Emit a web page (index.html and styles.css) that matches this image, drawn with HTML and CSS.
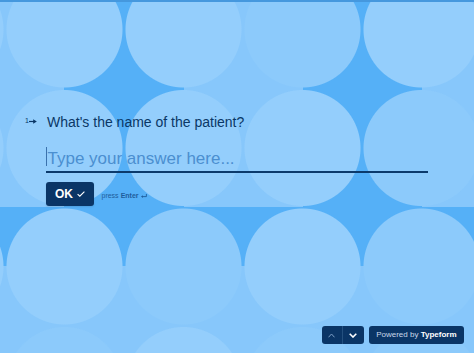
FILE: index.html
```html
<!DOCTYPE html>
<html lang="en">
<head>
<meta charset="utf-8">
<title>What's the name of the patient?</title>
<link rel="stylesheet" href="styles.css">
</head>
<body>
<div class="page">
  <div class="bg" aria-hidden="true">
    <div class="tile r"></div><div class="tile l"></div><div class="tile r"></div><div class="tile l faint"></div><div class="tile r"></div>
    <div class="tile r"></div><div class="tile l"></div><div class="tile r"></div><div class="tile l"></div><div class="tile r faint"></div>
    <div class="tile b"></div><div class="tile b"></div><div class="tile b faint"></div><div class="tile b"></div><div class="tile b faint"></div>
    <div class="tile t"></div><div class="tile t faint"></div><div class="tile t"></div><div class="tile t faint"></div><div class="tile t faint"></div>
  </div>
  <div class="progress"></div>
  <main class="content">
    <div class="question">
      <span class="qnum">1<svg class="qarrow" width="8" height="5" viewBox="0 0 8 5"><path d="M0 2.5H5" stroke="currentColor" stroke-width="1.2"/><path d="M4.2 0.3L7.8 2.5L4.2 4.7Z" fill="currentColor"/></svg></span>
      <h1 class="qtext">What's the name of the patient?</h1>
    </div>
    <div class="answer"><span class="caret"></span><span class="placeholder">Type your answer here...</span></div>
    <div class="actions">
      <button class="ok" type="button">OK<svg width="8" height="6" viewBox="0 0 8 6"><path d="M0.6 3.1L2.8 5.2L7.4 0.6" fill="none" stroke="#fff" stroke-width="1.1"/></svg></button>
      <span class="hint">press <b>Enter</b><svg class="ret" width="6" height="4" viewBox="0 0 6 4"><path d="M5.4 0V2.6H1" fill="none" stroke="currentColor" stroke-width="0.9"/><path d="M0 2.6L1.8 1.2V4Z" fill="currentColor"/></svg></span>
    </div>
  </main>
  <footer class="footer">
    <div class="nav">
      <button class="nav-btn up" type="button" aria-label="Previous"><svg width="7" height="5" viewBox="0 0 7 5"><path d="M0.5 4.3L3.5 1L6.5 4.3" fill="none" stroke="currentColor" stroke-width="1"/></svg></button>
      <button class="nav-btn down" type="button" aria-label="Next"><svg width="8" height="5" viewBox="0 0 8 5"><path d="M0.7 0.8L4 4L7.3 0.8" fill="none" stroke="currentColor" stroke-width="1.6"/></svg></button>
    </div>
    <a class="powered" href="#">Powered by <b>Typeform</b></a>
  </footer>
</div>
</body>
</html>
```

FILE: styles.css
```css
* { box-sizing: border-box; }
html, body { margin: 0; padding: 0; }
body { width: 474px; height: 353px; overflow: hidden; }

.page {
  position: relative;
  width: 474px;
  height: 353px;
  overflow: hidden;
  display: flex;
  flex-direction: column;
  background: #55b0f7;
  font-family: "Liberation Sans", Arial, sans-serif;
  color: #0a3766;
  --fill: #87c7fb;
  --circle: #94cefc;
}

.bg {
  position: absolute;
  left: -114px;
  top: -30px;
  display: grid;
  grid-template-columns: repeat(5, 119px);
  grid-auto-rows: 118.5px;
  z-index: 0;
}
.tile {
  background-image: radial-gradient(circle, var(--circle) 57.5px, rgba(148,206,252,0) 58.5px), var(--half);
}
.tile.faint { --circle: #8ccafb; }
.tile.l { --half: linear-gradient(to right, var(--fill) 50%, transparent 50%); }
.tile.r { --half: linear-gradient(to left, var(--fill) 50%, transparent 50%); }
.tile.b { --half: linear-gradient(to top, var(--fill) 50%, transparent 50%); }
.tile.t { --half: linear-gradient(to bottom, var(--fill) 50%, transparent 50%); }

.progress {
  position: relative;
  z-index: 1;
  height: 2px;
  flex-shrink: 0;
  background: #4598de;
}

.content {
  position: relative;
  z-index: 1;
  padding-top: 112px;
}

.question {
  display: flex;
  align-items: flex-start;
}
.qnum {
  display: inline-flex;
  align-items: center;
  width: 22px;
  margin-left: 25px;
  margin-top: 3px;
  font-size: 7px;
  line-height: 8px;
  color: #0a3766;
}
.qarrow { margin-left: 0.5px; }
.qtext {
  margin: 0;
  font-size: 14px;
  line-height: 16px;
  font-weight: normal;
  color: #0a3766;
}

.answer {
  margin: 17px 0 0 46px;
  width: 382px;
  height: 26px;
  font-size: 17px;
  line-height: 24px;
  border-bottom: 2px solid #0b3a6c;
  white-space: nowrap;
}
.caret {
  display: inline-block;
  width: 1px;
  height: 19px;
  vertical-align: -2px;
  background: #3b72ad;
  margin-right: 0.5px;
}
.placeholder { color: #4b8fd0; }

.actions {
  display: flex;
  align-items: center;
  margin: 9px 0 0 46px;
}
.ok {
  display: flex;
  align-items: center;
  gap: 4px;
  height: 24px;
  padding: 0 9px;
  border: 0;
  border-radius: 3px;
  background: #0a3566;
  color: #fff;
  font-family: inherit;
  font-size: 12px;
  font-weight: bold;
  box-shadow: 0 1px 2px rgba(0,0,0,0.1);
}
.hint {
  display: inline-flex;
  align-items: center;
  margin-left: 7.5px;
  padding-top: 3px;
  font-size: 7px;
  line-height: 8px;
  color: #1f5d9c;
}
.hint b { margin-left: 2px; }
.ret { margin-left: 2px; }

.footer {
  position: relative;
  z-index: 1;
  margin-top: auto;
  display: flex;
  justify-content: flex-end;
  gap: 5px;
  padding: 0 10px 9px 0;
}
.nav {
  display: flex;
  height: 18px;
  border-radius: 3px;
  overflow: hidden;
  background: #0a3566;
}
.nav-btn {
  display: flex;
  align-items: center;
  justify-content: center;
  height: 18px;
  padding: 0;
  border: 0;
  background: transparent;
}
.nav-btn.up { width: 20.5px; color: #7d9fc6; }
.nav-btn.down { width: 21.5px; color: #fff; border-left: 1px solid #24507f; }
.powered {
  display: block;
  height: 18px;
  padding: 0 7.5px;
  border-radius: 3px;
  background: #0a3566;
  color: #c9d8ea;
  font-size: 8px;
  line-height: 18px;
  text-decoration: none;
  white-space: nowrap;
}
.powered b { color: #fff; }
```
